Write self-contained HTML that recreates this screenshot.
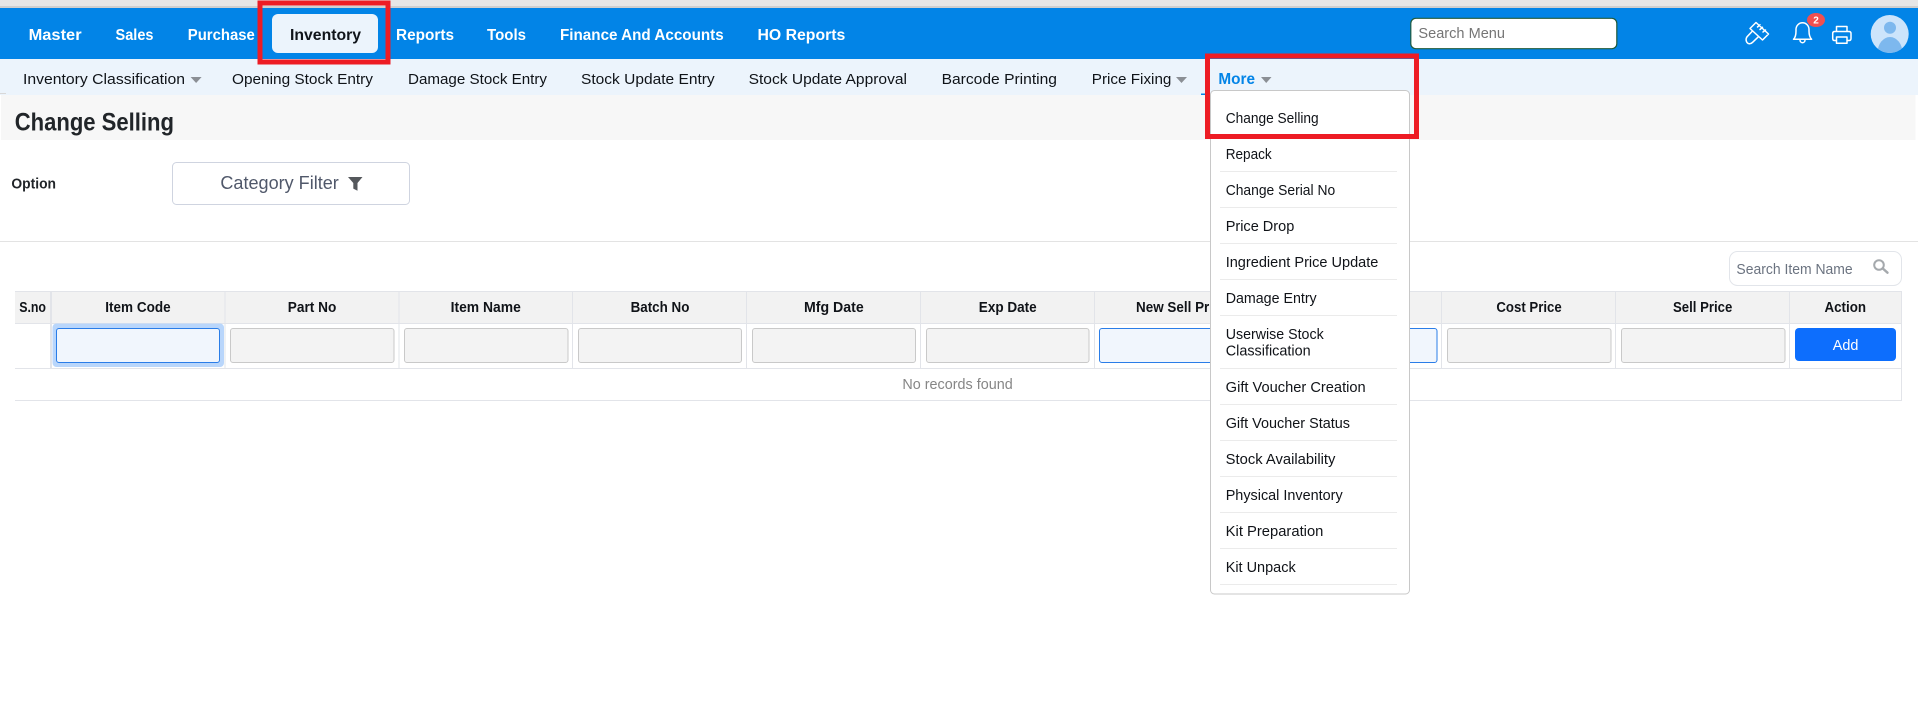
<!DOCTYPE html>
<html lang="en">
<head>
<meta charset="utf-8">
<title>Change Selling</title>
<style>
html,body{margin:0;padding:0;background:#fff;width:1918px;height:718px;overflow:hidden}
svg{display:block;font-family:"Liberation Sans",sans-serif}
.nav{font-size:16px;font-weight:700;fill:#fff}
.sub{font-size:15px;fill:#0f1318}
.th{font-size:14.5px;font-weight:700;fill:#101318}
.dd{font-size:14.5px;fill:#101318}
.inp{fill:#f3f3f3;stroke:#c9c9c9;stroke-width:1}
.blue{fill:#f1f6fd;stroke:#2a7de8;stroke-width:1}
.caret{fill:#8b8f95}
.sep{stroke:#ebebeb;stroke-width:1}
.grid{stroke:#e2e4e9;stroke-width:1}
.ic{fill:none;stroke:#fff;stroke-width:1.5;stroke-linejoin:round;stroke-linecap:round}
</style>
</head>
<body>
<svg width="1918" height="718" viewBox="0 0 1918 718" xmlns="http://www.w3.org/2000/svg">
<!-- browser strip -->
<rect x="0" y="0" width="1918" height="6" fill="#e6e6e6"/>
<rect x="0" y="6" width="1918" height="2" fill="#cfcfcf"/>
<!-- main nav -->
<rect x="0" y="8" width="1918" height="51" fill="#0284e7"/>
<rect x="272" y="14" width="106" height="39" rx="6" fill="#ecf4fc"/>
<text class="nav" x="28.6" y="40" textLength="53" lengthAdjust="spacingAndGlyphs">Master</text>
<text class="nav" x="115.5" y="40" textLength="38" lengthAdjust="spacingAndGlyphs">Sales</text>
<text class="nav" x="187.8" y="40" textLength="67" lengthAdjust="spacingAndGlyphs">Purchase</text>
<text class="nav" x="290" y="40" textLength="71" lengthAdjust="spacingAndGlyphs" style="fill:#10141a">Inventory</text>
<text class="nav" x="396" y="40" textLength="58" lengthAdjust="spacingAndGlyphs">Reports</text>
<text class="nav" x="487" y="40" textLength="39" lengthAdjust="spacingAndGlyphs">Tools</text>
<text class="nav" x="560" y="40" textLength="163.7" lengthAdjust="spacingAndGlyphs">Finance And Accounts</text>
<text class="nav" x="757.5" y="40" textLength="87.8" lengthAdjust="spacingAndGlyphs">HO Reports</text>
<!-- search menu -->
<rect x="1410.8" y="18.3" width="206" height="30.4" rx="5" fill="#fff" stroke="#1f5a3c" stroke-width="1.2"/>
<text x="1418.4" y="38" font-size="14.5" fill="#757575" textLength="86.6" lengthAdjust="spacingAndGlyphs">Search Menu</text>
<!-- brush -->
<path class="ic" d="M1756 22.5 L1768.5 34 L1762.5 40 L1750 28.5 Z M1752.5 31 L1747 36.8 Q1745.6 38.8 1746.3 41 Q1747 43.3 1749 43.7 Q1751 44 1752.6 42.3 L1758.6 36.6 M1757.5 27 L1760 24.8 M1760 29.5 L1762.5 27.3 M1763 32 L1765.5 30" stroke-width="1.3"/>
<!-- bell -->
<path class="ic" d="M1793.5 39.3 C1795.6 37.3 1796 34.5 1796 31 V29.5 A6.5 6.7 0 0 1 1809 29.5 V31 C1809 34.5 1809.6 37.3 1811.6 39.3 Z M1800 40 A2.5 2.7 0 0 0 1805 40"/>
<ellipse cx="1816" cy="20" rx="9" ry="7" fill="#f04f50"/>
<text x="1816" y="23.5" font-size="10" font-weight="700" fill="#fff" text-anchor="middle">2</text>
<!-- printer -->
<path class="ic" d="M1836.5 31 V26.5 H1847 V31 M1836 40.5 H1834.5 Q1832.7 40.5 1832.7 38.5 V33.5 Q1832.7 31.5 1834.5 31.5 H1849 Q1851 31.5 1851 33.5 V38.5 Q1851 40.5 1849 40.5 H1847.5 M1836.5 37 H1847 V43.2 H1836.5 Z"/>
<!-- avatar -->
<clipPath id="av"><circle cx="1889.7" cy="34" r="19"/></clipPath>
<circle cx="1889.7" cy="34" r="19" fill="#cce4fb"/>
<g clip-path="url(#av)">
<circle cx="1890" cy="27.7" r="6" fill="#7db8ee"/>
<ellipse cx="1890" cy="53" rx="12.5" ry="16" fill="#7db8ee"/>
</g>
<!-- subnav -->
<rect x="0" y="59" width="1918" height="36" fill="#ecf4fc"/>
<rect x="0" y="93" width="6" height="1" fill="#d8d8d8"/>
<text class="sub" x="23" y="84" textLength="162" lengthAdjust="spacingAndGlyphs">Inventory Classification</text>
<path class="caret" d="M190.6 77 H201.6 L196.1 83 Z"/>
<text class="sub" x="232" y="84" textLength="141" lengthAdjust="spacingAndGlyphs">Opening Stock Entry</text>
<text class="sub" x="408" y="84" textLength="139" lengthAdjust="spacingAndGlyphs">Damage Stock Entry</text>
<text class="sub" x="581" y="84" textLength="133.7" lengthAdjust="spacingAndGlyphs">Stock Update Entry</text>
<text class="sub" x="748.6" y="84" textLength="158.4" lengthAdjust="spacingAndGlyphs">Stock Update Approval</text>
<text class="sub" x="941.6" y="84" textLength="115.4" lengthAdjust="spacingAndGlyphs">Barcode Printing</text>
<text class="sub" x="1091.8" y="84" textLength="79.6" lengthAdjust="spacingAndGlyphs">Price Fixing</text>
<path class="caret" d="M1176 77 H1187 L1181.5 83 Z"/>
<text x="1218.4" y="84" font-size="15.5" font-weight="700" fill="#0284e7" textLength="36.6" lengthAdjust="spacingAndGlyphs">More</text>
<path class="caret" d="M1261 77 H1271.5 L1266.2 83 Z"/>
<rect x="1201" y="93.5" width="9" height="1.5" fill="#0284e7"/>
<!-- title bar -->
<rect x="1" y="95" width="1914.5" height="45" fill="#f7f7f7"/>
<text x="14.7" y="130.5" font-size="25" font-weight="700" fill="#212529" textLength="159.3" lengthAdjust="spacingAndGlyphs">Change Selling</text>
<!-- option row -->
<text x="11.4" y="188.5" font-size="14.5" font-weight="700" fill="#212529" textLength="44.6" lengthAdjust="spacingAndGlyphs">Option</text>
<rect x="172.5" y="162.5" width="237" height="42" rx="4" fill="#fff" stroke="#cfd4e0" stroke-width="1"/>
<text x="220.4" y="189" font-size="18" fill="#50586a" textLength="118.4" lengthAdjust="spacingAndGlyphs">Category Filter</text>
<path d="M348 177 H362.5 L357.5 183 V190.7 L353.3 188.6 V183 Z" fill="#55585c"/>
<!-- divider -->
<rect x="0" y="241" width="1918" height="1" fill="#e3e3e3"/>
<!-- item search -->
<rect x="1729.5" y="251.5" width="172" height="34" rx="8" fill="#fff" stroke="#e2e5ea" stroke-width="1"/>
<text x="1736.4" y="274" font-size="14.5" fill="#6b7380" textLength="116.3" lengthAdjust="spacingAndGlyphs">Search Item Name</text>
<circle cx="1879" cy="265" r="4.8" fill="none" stroke="#a5a9ad" stroke-width="2"/>
<path d="M1882.8 268.5 L1887.5 272.7" stroke="#a5a9ad" stroke-width="2.4" stroke-linecap="round"/>
<!-- table -->
<rect x="15" y="291" width="1886.7" height="32.3" fill="#f2f2f2"/>
<path class="grid" d="M15 291.5 H1901.7 M15 323.5 H1901.7 M15 368.5 H1901.7 M15 400.5 H1901.7 M1901.5 291 V401"/>
<path class="grid" d="M50.5 291 V368 M51.5 291 V368 M225 291 V368 M399 291 V368 M572.5 291 V368 M746.5 291 V368 M920.5 291 V368 M1094.5 291 V368 M1268 291 V368 M1441.5 291 V368 M1615.5 291 V368 M1789.5 291 V368"/>
<text class="th" x="19.2" y="312" textLength="26.8" lengthAdjust="spacingAndGlyphs">S.no</text>
<text class="th" x="105.3" y="312" textLength="65.3" lengthAdjust="spacingAndGlyphs">Item Code</text>
<text class="th" x="287.8" y="312" textLength="48.5" lengthAdjust="spacingAndGlyphs">Part No</text>
<text class="th" x="450.6" y="312" textLength="70.2" lengthAdjust="spacingAndGlyphs">Item Name</text>
<text class="th" x="630.6" y="312" textLength="58.8" lengthAdjust="spacingAndGlyphs">Batch No</text>
<text class="th" x="804" y="312" textLength="59.7" lengthAdjust="spacingAndGlyphs">Mfg Date</text>
<text class="th" x="978.8" y="312" textLength="57.9" lengthAdjust="spacingAndGlyphs">Exp Date</text>
<text class="th" x="1136" y="312" textLength="92" lengthAdjust="spacingAndGlyphs">New Sell Price</text>
<text class="th" x="1496.4" y="312" textLength="65.3" lengthAdjust="spacingAndGlyphs">Cost Price</text>
<text class="th" x="1673" y="312" textLength="59.3" lengthAdjust="spacingAndGlyphs">Sell Price</text>
<text class="th" x="1824.5" y="312" textLength="41.5" lengthAdjust="spacingAndGlyphs">Action</text>
<!-- inputs -->
<rect x="52.5" y="323.5" width="171.5" height="43.5" rx="4" fill="#b9d6fb"/>
<rect class="blue" x="56.5" y="328.5" width="163" height="34" rx="2.5"/>
<rect class="inp" x="230.5" y="328.5" width="163.5" height="34" rx="2.5"/>
<rect class="inp" x="404.5" y="328.5" width="163.5" height="34" rx="2.5"/>
<rect class="inp" x="578.5" y="328.5" width="163" height="34" rx="2.5"/>
<rect class="inp" x="752.5" y="328.5" width="163" height="34" rx="2.5"/>
<rect class="inp" x="926.5" y="328.5" width="162.5" height="34" rx="2.5"/>
<rect class="blue" x="1099.5" y="328.5" width="163.5" height="34" rx="2.5"/>
<rect class="blue" x="1273.5" y="328.5" width="163.5" height="34" rx="2.5"/>
<rect class="inp" x="1447.5" y="328.5" width="163.5" height="34" rx="2.5"/>
<rect class="inp" x="1621.5" y="328.5" width="163.5" height="34" rx="2.5"/>
<rect x="1795" y="328" width="101" height="33" rx="4" fill="#0d6efd"/>
<text x="1832.7" y="350" font-size="14.5" fill="#fff" textLength="25.7" lengthAdjust="spacingAndGlyphs">Add</text>
<text x="902.4" y="389" font-size="14.5" fill="#868686" textLength="110.3" lengthAdjust="spacingAndGlyphs">No records found</text>
<!-- dropdown -->
<rect x="1210.5" y="90.5" width="199" height="503.5" rx="4" fill="#fff" stroke="#c8c8c8" stroke-width="1"/>
<path class="sep" d="M1220 135.5 H1397 M1220 171.5 H1397 M1220 207.5 H1397 M1220 243.5 H1397 M1220 279.5 H1397 M1220 315.5 H1397 M1220 368.5 H1397 M1220 404.5 H1397 M1220 440.5 H1397 M1220 476.5 H1397 M1220 512.5 H1397 M1220 548.5 H1397 M1220 584.5 H1397"/>
<text class="dd" x="1225.7" y="123" textLength="93" lengthAdjust="spacingAndGlyphs">Change Selling</text>
<text class="dd" x="1225.7" y="159" textLength="46" lengthAdjust="spacingAndGlyphs">Repack</text>
<text class="dd" x="1225.7" y="195" textLength="109.5" lengthAdjust="spacingAndGlyphs">Change Serial No</text>
<text class="dd" x="1225.7" y="231" textLength="68.6" lengthAdjust="spacingAndGlyphs">Price Drop</text>
<text class="dd" x="1225.7" y="267" textLength="152.7" lengthAdjust="spacingAndGlyphs">Ingredient Price Update</text>
<text class="dd" x="1225.7" y="303" textLength="91" lengthAdjust="spacingAndGlyphs">Damage Entry</text>
<text class="dd" x="1225.7" y="339" textLength="98" lengthAdjust="spacingAndGlyphs">Userwise Stock</text>
<text class="dd" x="1225.7" y="355.5" textLength="85" lengthAdjust="spacingAndGlyphs">Classification</text>
<text class="dd" x="1225.7" y="392" textLength="140" lengthAdjust="spacingAndGlyphs">Gift Voucher Creation</text>
<text class="dd" x="1225.7" y="428" textLength="124.3" lengthAdjust="spacingAndGlyphs">Gift Voucher Status</text>
<text class="dd" x="1225.7" y="464" textLength="109.7" lengthAdjust="spacingAndGlyphs">Stock Availability</text>
<text class="dd" x="1225.7" y="500" textLength="117" lengthAdjust="spacingAndGlyphs">Physical Inventory</text>
<text class="dd" x="1225.7" y="536" textLength="97.7" lengthAdjust="spacingAndGlyphs">Kit Preparation</text>
<text class="dd" x="1225.7" y="572" textLength="70" lengthAdjust="spacingAndGlyphs">Kit Unpack</text>
<!-- red highlights -->
<rect x="260" y="3" width="128" height="59" fill="none" stroke="#ed1c24" stroke-width="5"/>
<rect x="1207.5" y="56" width="209" height="80.5" fill="none" stroke="#ed1c24" stroke-width="5"/>
</svg>
</body>
</html>
